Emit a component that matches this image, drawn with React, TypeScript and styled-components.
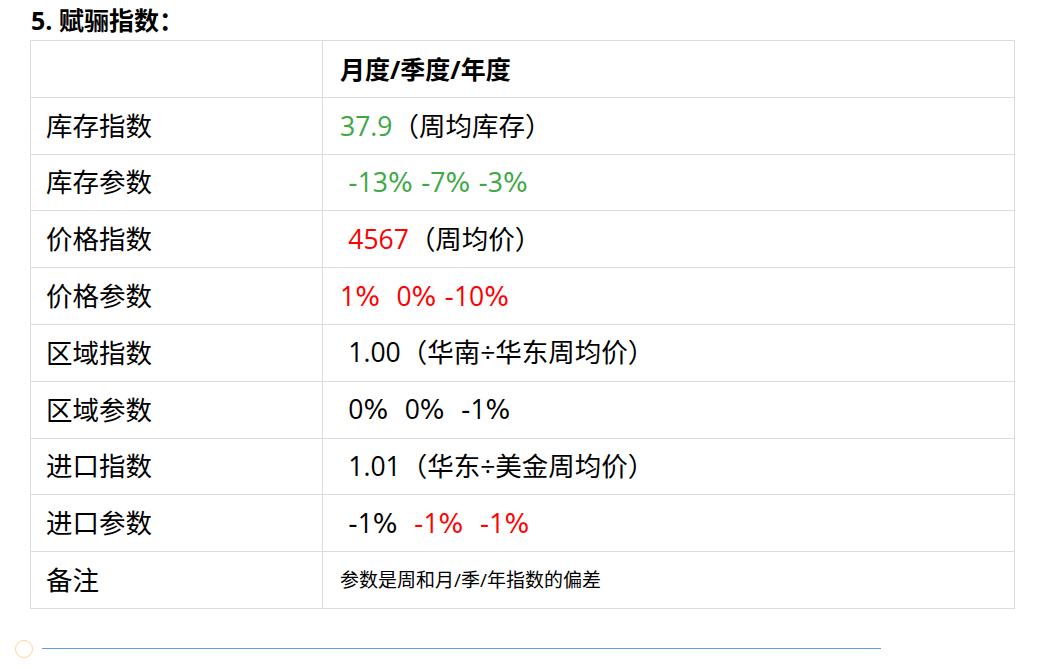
import React from "react";
import styled, { createGlobalStyle } from "styled-components";

const Global = createGlobalStyle`
  html, body { margin: 0; padding: 0; background: #fff; }
  body { font-family: "Open Sans", "Noto Sans CJK SC", sans-serif; color: #000; }
`;

const Page = styled.div`
  padding: 5px 0 0 30px;
  width: 985px;
`;

const Heading = styled.h3`
  margin: 0 0 4px 1px;
  font-size: 25px;
  line-height: 31px;
  font-weight: 700;
  font-family: "Open Sans", "Noto Sans CJK SC", sans-serif;
`;

const Table = styled.table`
  width: 985px;
  border-collapse: collapse;
  table-layout: fixed;
`;

const Row = styled.tr`
  height: 56.8px;
`;

const Cell = styled.td<{ $label?: boolean; $head?: boolean; $small?: boolean }>`
  border: 1px solid #dcdcdc;
  padding: 0 ${(p) => (p.$label ? "15px" : "17px")};
  font-size: ${(p) => (p.$head ? "25px" : p.$small ? "19px" : "26.5px")};
  font-weight: ${(p) => (p.$head ? 700 : 400)};
  line-height: 30px;
  vertical-align: middle;
  white-space: pre;
`;

const Tone = styled.span<{ $c: "green" | "red" | "black" }>`
  color: ${(p) => (p.$c === "green" ? "#3ea845" : p.$c === "red" ? "#ff0000" : "#000")};
`;

const Sym = styled.span`
  font-family: "DejaVu Sans", "Open Sans", sans-serif;
  font-size: 26px;
`;

const Footer = styled.div`
  display: flex;
  align-items: center;
  gap: 9px;
  margin: 31px 0 0 -15px;
`;

const Ring = styled.span`
  flex: none;
  width: 18px;
  height: 18px;
  border-radius: 50%;
  border: 1px solid #ffd596;
  box-sizing: border-box;
`;

const Rule = styled.span`
  flex: none;
  width: 839px;
  height: 1px;
  background: #5c9ef0;
`;

function Text({ s }: { s: string }) {
  const parts = s.split(/([%\- ]+)/).filter((p) => p.length > 0);
  return (
    <>
      {parts.map((p, i) => (/^[%\- ]+$/.test(p) ? <Sym key={i}>{p}</Sym> : <React.Fragment key={i}>{p}</React.Fragment>))}
    </>
  );
}

type Seg = [string, "green" | "red" | "black"];
const rows: { label: string; value: Seg[]; small?: boolean }[] = [
  { label: "库存指数", value: [["37.9", "green"], ["（周均库存）", "black"]] },
  { label: "库存参数", value: [[" -13% -7% -3%", "green"]] },
  { label: "价格指数", value: [[" 4567", "red"], ["（周均价）", "black"]] },
  { label: "价格参数", value: [["1%  0% -10%", "red"]] },
  { label: "区域指数", value: [[" 1.00（华南÷华东周均价）", "black"]] },
  { label: "区域参数", value: [[" 0%  0%  -1%", "black"]] },
  { label: "进口指数", value: [[" 1.01（华东÷美金周均价）", "black"]] },
  { label: "进口参数", value: [[" -1%  ", "black"], ["-1%  -1%", "red"]] },
  { label: "备注", value: [["参数是周和月/季/年指数的偏差", "black"]], small: true },
];

export default function App() {
  return (
    <Page>
      <Global />
      <Heading>5. 赋骊指数：</Heading>
      <Table>
        <colgroup>
          <col style={{ width: 292 }} />
          <col />
        </colgroup>
        <tbody>
          <Row>
            <Cell $label />
            <Cell $head>月度/季度/年度</Cell>
          </Row>
          {rows.map((r) => (
            <Row key={r.label}>
              <Cell $label>{r.label}</Cell>
              <Cell $small={r.small}>
                {r.value.map(([t, c], i) => (
                  <Tone key={i} $c={c}>
                    {r.small ? t : <Text s={t} />}
                  </Tone>
                ))}
              </Cell>
            </Row>
          ))}
        </tbody>
      </Table>
      <Footer>
        <Ring />
        <Rule />
      </Footer>
    </Page>
  );
}
